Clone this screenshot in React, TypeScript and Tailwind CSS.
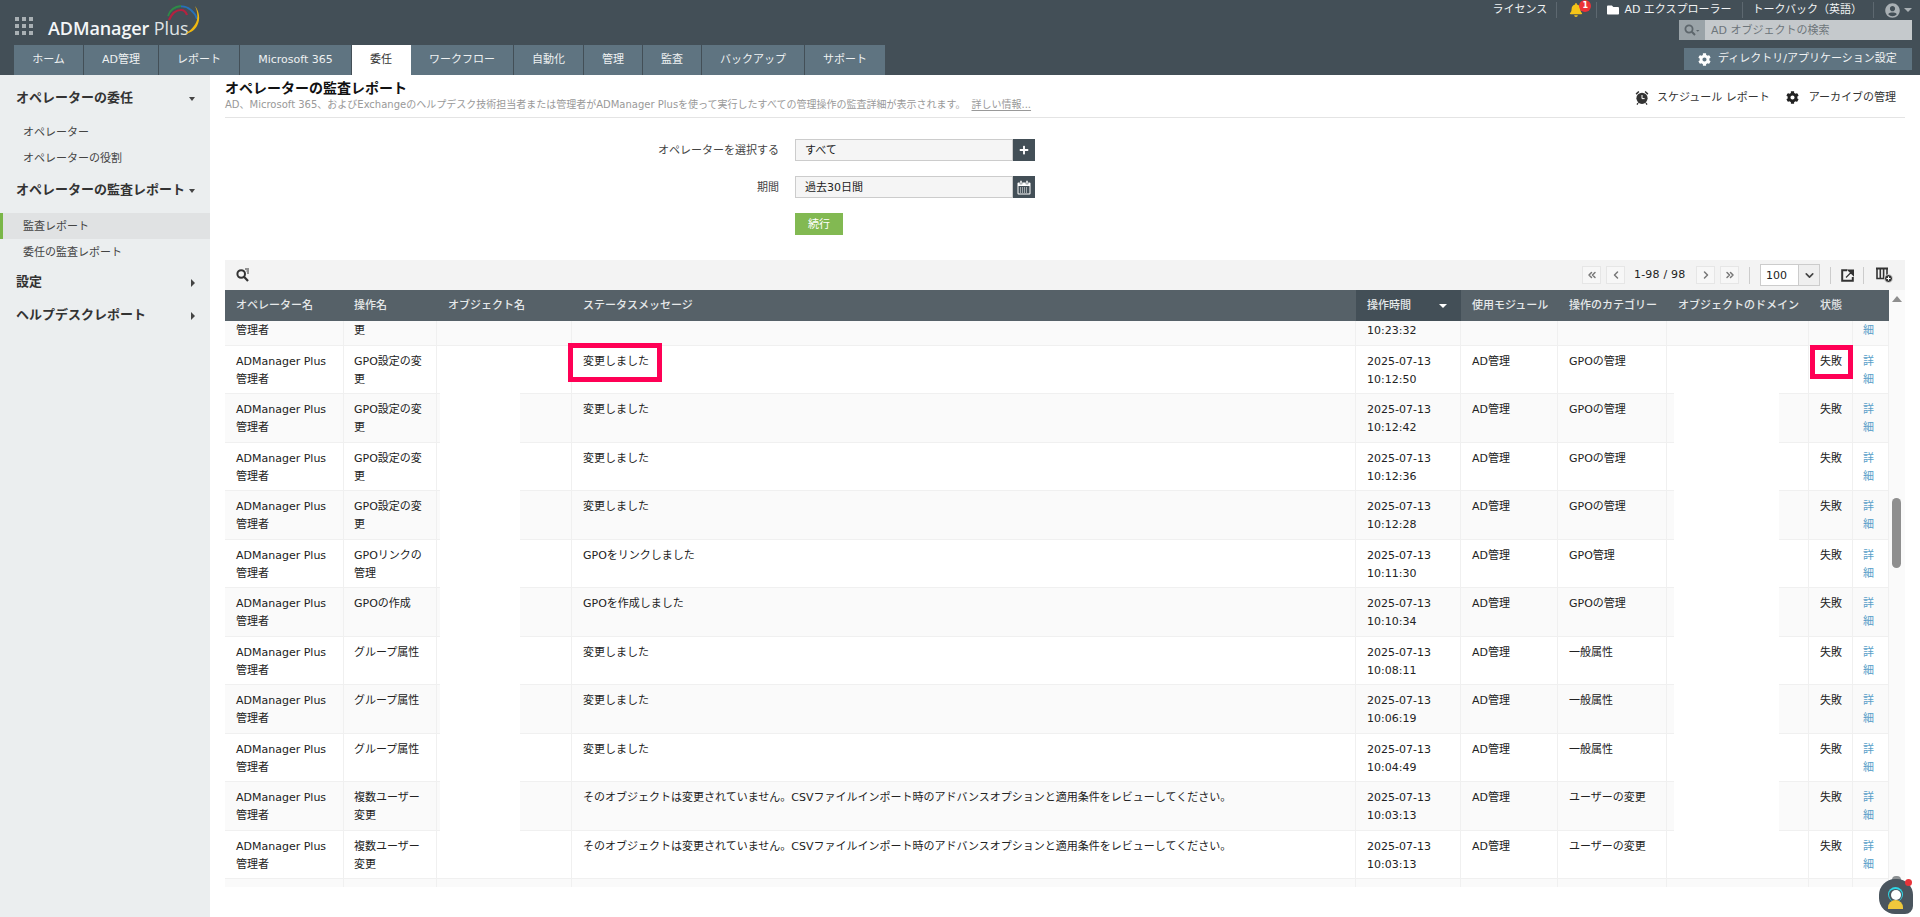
import React from "react";
import { FaBell, FaCog, FaFolder, FaPlus, FaUserCircle } from "react-icons/fa";
import { ChevronDown, ChevronLeft, ChevronRight, ChevronsLeft, ChevronsRight } from "lucide-react";

const tabs = [
  { label: "ホーム", w: "w-[69px]" },
  { label: "AD管理", w: "w-[74px]" },
  { label: "レポート", w: "w-[80px]" },
  { label: "Microsoft 365", w: "w-[111px]" },
  { label: "委任", w: "w-[59px]", active: true },
  { label: "ワークフロー", w: "w-[102px]" },
  { label: "自動化", w: "w-[69px]" },
  { label: "管理", w: "w-[58px]" },
  { label: "監査", w: "w-[58px]" },
  { label: "バックアップ", w: "w-[102px]" },
  { label: "サポート", w: "w-[80px]" },
];

const headers = [
  { label: "オペレーター名", w: "w-[119px]", pl: "pl-[11px]" },
  { label: "操作名", w: "w-[93px]", pl: "pl-[10px]" },
  { label: "オブジェクト名", w: "w-[135px]", pl: "pl-[11px]" },
  { label: "ステータスメッセージ", w: "w-[784px]", pl: "pl-[11px]" },
  { label: "操作時間", w: "w-[105px]", pl: "pl-[11px]", sorted: true },
  { label: "使用モジュール", w: "w-[97px]", pl: "pl-[11px]" },
  { label: "操作のカテゴリー", w: "w-[109px]", pl: "pl-[11px]" },
  { label: "オブジェクトのドメイン", w: "w-[142px]", pl: "pl-[11px]" },
  { label: "状態", w: "w-[44px]", pl: "pl-[11px]" },
  { label: "", w: "w-[36px]", pl: "pl-[10px]" },
];

const changed = "変更しました";
const noChange =
  "そのオブジェクトは変更されていません。CSVファイルインポート時のアドバンスオプションと適用条件をレビューしてください。";

const rows = [
  { op: "GPO設定の変更", msg: changed, time: "10:12:50", cat: "GPOの管理" },
  { op: "GPO設定の変更", msg: changed, time: "10:12:42", cat: "GPOの管理" },
  { op: "GPO設定の変更", msg: changed, time: "10:12:36", cat: "GPOの管理" },
  { op: "GPO設定の変更", msg: changed, time: "10:12:28", cat: "GPOの管理" },
  { op: "GPOリンクの管理", msg: "GPOをリンクしました", time: "10:11:30", cat: "GPO管理" },
  { op: "GPOの作成", msg: "GPOを作成しました", time: "10:10:34", cat: "GPOの管理" },
  { op: "グループ属性", msg: changed, time: "10:08:11", cat: "一般属性" },
  { op: "グループ属性", msg: changed, time: "10:06:19", cat: "一般属性" },
  { op: "グループ属性", msg: changed, time: "10:04:49", cat: "一般属性" },
  { op: "複数ユーザー変更", msg: noChange, time: "10:03:13", cat: "ユーザーの変更" },
  { op: "複数ユーザー変更", msg: noChange, time: "10:03:13", cat: "ユーザーの変更" },
];

const Logo = () => (
  <div className="relative ml-[48px] mt-[15px] w-[155px] h-[26px]">
    <span className="font-['Open_Sans',sans-serif] text-[18px] leading-[26px] font-semibold text-[#f4f6f7] tracking-[-0.1px]">
      ADManager <span className="font-normal text-[#dfe3e5]">Plus</span>
    </span>
    <svg className="absolute left-[118px] -top-[10px]" width="36" height="36" viewBox="0 0 36 36" fill="none">
      <path d="M2 11C4 5 9 1.5 15 1" stroke="#2e8b47" strokeWidth="1.8" />
      <path d="M15 1.5C22 1 29 7 31 14" stroke="#2770b8" strokeWidth="1.8" />
      <path d="M3 15C6 8 11 5 15 5C18 5 20 7 21 10" stroke="#b5213f" strokeWidth="2.2" />
      <path d="M29 1C33 6 35 14 31 21C28 26 24 28 19 29C25 25 29 21 31 15C32 10 31 5 29 1Z" fill="#efb810" />
    </svg>
  </div>
);

const Dots = () => (
  <div className="absolute left-[15px] top-[17px] grid grid-cols-3 gap-[3px]">
    {Array.from({ length: 9 }).map((_, i) => (
      <div key={i} className="w-[4px] h-[4px] bg-[#a9b0b4]" />
    ))}
  </div>
);

const Divider = ({ className = "" }: { className?: string }) => (
  <div className={`w-px h-[16px] bg-[#5d6870] ${className}`} />
);

const Header = () => (
  <header className="relative h-[75px] bg-[#434f57] flex justify-between shrink-0">
    <Dots />
    <div className="flex flex-col justify-between">
      <Logo />
      <nav className="flex ml-[14px] h-[30px] gap-px">
        {tabs.map((t) => (
          <div
            key={t.label}
            className={`${t.w} flex items-center justify-center pt-px text-[11px] ${
              t.active ? "bg-white text-[#333333] -mx-[0.5px]" : "bg-[#5f7481] text-[#eef1f2]"
            }`}
          >
            {t.label}
          </div>
        ))}
      </nav>
    </div>
    <div className="flex flex-col items-end pr-[8px]">
      <div className="flex items-center h-[18px] pt-[2px] text-[11px] text-[#f1f3f4]">
        <span>ライセンス</span>
        <Divider className="ml-[9px]" />
        <div className="relative ml-[12px] w-[26px]">
          <FaBell className="text-[#f5c518] text-[14px]" />
          <span className="absolute left-[10px] -top-[3px] w-[12px] h-[12px] rounded-full bg-[#ec3237] text-white text-[8px] leading-[12px] font-bold text-center">
            1
          </span>
        </div>
        <Divider className="ml-[1px]" />
        <FaFolder className="ml-[10px] text-white text-[12px]" />
        <span className="ml-[5px]">AD エクスプローラー</span>
        <Divider className="ml-[10px]" />
        <span className="ml-[10px]">トークバック（英語）</span>
        <Divider className="ml-[11px]" />
        <FaUserCircle className="ml-[11px] text-[#a9b0b4] text-[15px]" />
        <div className="ml-[4px] w-0 h-0 border-x-[4px] border-x-transparent border-t-[4px] border-t-[#a9b0b4]" />
      </div>
      <div className="mt-[2px] flex w-[233px] h-[20px]">
        <div className="w-[26px] bg-[#9aa3a8] flex items-center justify-center">
          <SearchDropIcon />
        </div>
        <div className="flex-1 bg-[#c5c9cc] pl-[6px] text-[11px] leading-[22px] text-[#6e767b]">AD オブジェクトの検索</div>
      </div>
      <div className="mt-[8px] flex items-center w-[228px] h-[22px] bg-[#5f7481] text-[11px] text-[#f1f3f4] pl-[14px]">
        <FaCog className="text-white text-[13px]" />
        <span className="ml-[7px] pt-px whitespace-nowrap">ディレクトリ/アプリケーション設定</span>
      </div>
    </div>
  </header>
);

const SearchDropIcon = () => (
  <svg width="16" height="12" viewBox="0 0 16 12" fill="none">
    <circle cx="5" cy="5" r="3.6" stroke="#5d666c" strokeWidth="1.8" />
    <path d="M7.8 7.8L11 11" stroke="#5d666c" strokeWidth="2" />
    <path d="M12 6h3.5l-1.75 1.8z" fill="#5d666c" />
  </svg>
);

const CaretDown = () => (
  <div className="w-0 h-0 border-x-[3.5px] border-x-transparent border-t-[4px] border-t-[#444444]" />
);
const CaretRight = () => (
  <div className="w-0 h-0 border-y-[4px] border-y-transparent border-l-[4px] border-l-[#444444]" />
);

const SideHead = ({ label, open, className = "" }: { label: string; open?: boolean; className?: string }) => (
  <div className={`flex items-center justify-between h-[33px] pl-[16px] pr-[15px] text-[13px] font-bold text-[#333333] ${className}`}>
    <span>{label}</span>
    <span className="pt-[3px]">{open ? <CaretDown /> : <CaretRight />}</span>
  </div>
);

const SideItem = ({ label, active }: { label: string; active?: boolean }) => (
  <div
    className={`h-[26px] leading-[28px] pl-[23px] text-[11px] text-[#444444] ${
      active ? "bg-[#e0e2e3] border-l-[3px] border-[#7ab648] !pl-[20px]" : ""
    }`}
  >
    {label}
  </div>
);

const Sidebar = () => (
  <aside className="w-[210px] shrink-0 bg-[#ebeeef] pt-[6px]">
    <SideHead label="オペレーターの委任" open />
    <div className="mt-[5px]">
      <SideItem label="オペレーター" />
      <SideItem label="オペレーターの役割" />
    </div>
    <SideHead label="オペレーターの監査レポート" open className="mt-[2px]" />
    <div className="mt-[7px]">
      <SideItem label="監査レポート" active />
      <SideItem label="委任の監査レポート" />
    </div>
    <SideHead label="設定" />
    <SideHead label="ヘルプデスクレポート" />
  </aside>
);

const AlarmIcon = () => (
  <svg width="14" height="15" viewBox="0 0 14 15">
    <circle cx="7" cy="8.3" r="5.6" fill="#333333" />
    <path d="M0.6 3.6L3.4 1l1 1L1.6 4.8zM13.4 3.6L10.6 1l-1 1 2.8 2.8z" fill="#333333" />
    <path d="M7 5v3.6h2.6" stroke="#ffffff" strokeWidth="1" fill="none" />
    <path d="M3 13l-1 1.6M11 13l1 1.6" stroke="#333333" strokeWidth="1.3" />
  </svg>
);

const CalendarIcon = () => (
  <svg width="14" height="15" viewBox="0 0 14 15" fill="none">
    <rect x="0.5" y="2.5" width="13" height="12" rx="1" fill="#ffffff" />
    <rect x="1.5" y="6" width="11" height="7.5" fill="#434f57" />
    <rect x="3" y="0.5" width="2" height="3.5" fill="#ffffff" stroke="#434f57" strokeWidth="0.5" />
    <rect x="9" y="0.5" width="2" height="3.5" fill="#ffffff" stroke="#434f57" strokeWidth="0.5" />
    <path d="M3 8h8M3 10h8M3 12h8" stroke="#ffffff" strokeWidth="1" strokeDasharray="1 1" />
  </svg>
);

const FilterSearchIcon = () => (
  <svg width="14" height="14" viewBox="0 0 14 14" fill="none">
    <circle cx="5.2" cy="6" r="3.8" stroke="#333333" strokeWidth="2" />
    <path d="M8 8.8L12 13" stroke="#333333" strokeWidth="2.2" />
    <path d="M9 1h4M10.5 3h2.5M11 5h2" stroke="#333333" strokeWidth="1" />
  </svg>
);

const ExportIcon = () => (
  <svg width="13" height="13" viewBox="0 0 13 13" fill="none">
    <path d="M6 1.2H1.2v10.6h10.6V8" stroke="#333333" strokeWidth="2" />
    <path d="M5 8.5L10 3.5M7 1h5.5v5.5z" stroke="#333333" strokeWidth="1.2" fill="#333333" />
  </svg>
);

const ColumnsIcon = () => (
  <svg width="17" height="16" viewBox="0 0 17 16" fill="none">
    <path d="M0 1.5h12" stroke="#333333" strokeWidth="2" />
    <path d="M1 2v9.5h10V2M4.3 2v9.5M7.6 2v9.5" stroke="#333333" strokeWidth="1.6" />
    <circle cx="12.5" cy="11.5" r="4" fill="#333333" stroke="#f3f3f3" strokeWidth="0.8" />
    <path d="M10.5 11.5h4M12.5 9.5v4" stroke="#ffffff" strokeWidth="1" />
  </svg>
);

const PageButton = ({ children }: { children: React.ReactNode }) => (
  <div className="w-[19px] h-[18px] bg-[#f7f7f7] border border-[#e6e6e6] flex items-center justify-center text-[#777777]">
    {children}
  </div>
);

const ToolDivider = () => <div className="w-px h-[17px] bg-[#cccccc]" />;

const Toolbar = () => (
  <div className="h-[30px] bg-[#f3f3f3] flex items-center justify-between pl-[11px] pr-[12px]">
    <FilterSearchIcon />
    <div className="flex items-center text-[11px] text-[#222222]">
      <PageButton><ChevronsLeft size={12} strokeWidth={3} /></PageButton>
      <div className="ml-[5px]"><PageButton><ChevronLeft size={12} strokeWidth={3} /></PageButton></div>
      <span className="ml-[9px] w-[52px] pt-px tracking-[0.2px]">1-98 / 98</span>
      <div className="ml-[10px]"><PageButton><ChevronRight size={12} strokeWidth={3} /></PageButton></div>
      <div className="ml-[5px]"><PageButton><ChevronsRight size={12} strokeWidth={3} /></PageButton></div>
      <div className="ml-[10px]"><ToolDivider /></div>
      <div className="ml-[10px] flex w-[60px] h-[22px] bg-white border border-[#cccccc]">
        <span className="flex-1 pl-[5px] leading-[21px]">100</span>
        <div className="w-[21px] bg-[#efefef] border-l border-[#cccccc] flex items-center justify-center text-[#444444]">
          <ChevronDown size={13} strokeWidth={3} />
        </div>
      </div>
      <div className="ml-[10px]"><ToolDivider /></div>
      <div className="ml-[10px]"><ExportIcon /></div>
      <div className="ml-[9px]"><ToolDivider /></div>
      <div className="ml-[12px]"><ColumnsIcon /></div>
    </div>
  </div>
);

const Cell = ({ w, pl, top = "pt-[7px]", children }: { w: string; pl: string; top?: string; children?: React.ReactNode }) => (
  <div className={`${w} ${pl} ${top} shrink-0 h-full pr-[8px] border-r border-[#f0f0f0] text-[11px] leading-[18px] text-[#222222] overflow-hidden`}>
    {children}
  </div>
);

// the row scrolled half out of view: only its second text line shows
const TopRow = () => (
  <div className="flex h-[24.5px] border-b border-[#f0f0f0] bg-[#fafafa]">
    <Cell w="w-[119px]" pl="pl-[11px]" top="pt-px">管理者</Cell>
    <Cell w="w-[93px]" pl="pl-[10px]" top="pt-px">更</Cell>
    <Cell w="w-[135px]" pl="pl-[11px]" />
    <Cell w="w-[784px]" pl="pl-[11px]" />
    <Cell w="w-[105px]" pl="pl-[11px]" top="pt-px">10:23:32</Cell>
    <Cell w="w-[97px]" pl="pl-[11px]" />
    <Cell w="w-[109px]" pl="pl-[11px]" />
    <Cell w="w-[142px]" pl="pl-[11px]" />
    <Cell w="w-[44px]" pl="pl-[11px]" />
    <Cell w="w-[36px]" pl="pl-[10px]" top="pt-px">
      <span className="text-[#5a9fc9]">細</span>
    </Cell>
  </div>
);

const AuditTable = () => (
  <div className="relative flex">
    <div className="w-[1664px]">
      <div className="flex h-[31px] bg-[#566168]">
        {headers.map((h) => (
          <div
            key={h.label + h.w}
            className={`${h.w} ${h.pl} shrink-0 flex items-center justify-between pt-px pr-[14px] text-[11px] font-medium text-[#e6e9ea] ${
              h.sorted ? "bg-[#434f57]" : ""
            }`}
          >
            <span className="whitespace-nowrap">{h.label}</span>
            {h.sorted && (
              <div className="w-0 h-0 border-x-[4px] border-x-transparent border-t-[4px] border-t-white" />
            )}
          </div>
        ))}
      </div>
      <div className="relative h-[566px] overflow-hidden">
        <TopRow />
        {rows.map((r, i) => (
          <div
            key={i}
            className={`flex h-[48.5px] border-b border-[#f0f0f0] ${i % 2 === 1 ? "bg-[#fafafa]" : "bg-white"}`}
          >
            <Cell w="w-[119px]" pl="pl-[11px]">ADManager Plus 管理者</Cell>
            <Cell w="w-[93px]" pl="pl-[10px]">{r.op}</Cell>
            <Cell w="w-[135px]" pl="pl-[11px]" />
            <Cell w="w-[784px]" pl="pl-[11px]">{r.msg}</Cell>
            <Cell w="w-[105px]" pl="pl-[11px]">2025-07-13 {r.time}</Cell>
            <Cell w="w-[97px]" pl="pl-[11px]">AD管理</Cell>
            <Cell w="w-[109px]" pl="pl-[11px]">{r.cat}</Cell>
            <Cell w="w-[142px]" pl="pl-[11px]" />
            <Cell w="w-[44px]" pl="pl-[11px]">失敗</Cell>
            <Cell w="w-[36px]" pl="pl-[10px]">
              <span className="text-[#5a9fc9]">詳細</span>
            </Cell>
          </div>
        ))}
        <div className="flex h-[48.5px] bg-[#fafafa]">
          <Cell w="w-[119px]" pl="pl-[11px]" />
          <Cell w="w-[93px]" pl="pl-[10px]" />
          <Cell w="w-[135px]" pl="pl-[11px]" />
          <Cell w="w-[784px]" pl="pl-[11px]" />
          <Cell w="w-[105px]" pl="pl-[11px]" />
          <Cell w="w-[97px]" pl="pl-[11px]" />
          <Cell w="w-[109px]" pl="pl-[11px]" />
          <Cell w="w-[142px]" pl="pl-[11px]" />
          <Cell w="w-[44px]" pl="pl-[11px]" />
          <Cell w="w-[36px]" pl="pl-[10px]" />
        </div>
        {/* merged blank cells that sit over the striped rows */}
        <div className="absolute left-[215px] top-[72px] w-[80px] h-[485px] bg-white" />
        <div className="absolute left-[1449px] top-[72px] w-[105px] h-[485px] bg-white" />
        {/* red review marks */}
        <div className="absolute left-[343px] top-[22px] w-[94px] h-[39px] border-[5px] border-[#ff0055]" />
        <div className="absolute left-[1585px] top-[24px] w-[43px] h-[34px] border-[5px] border-[#ff0055]" />
      </div>
    </div>
    <div className="relative w-[16px] bg-[#fafafa]">
      <div className="absolute left-[3px] top-[6px] w-0 h-0 border-x-[5px] border-x-transparent border-b-[6px] border-b-[#8f8f8f]" />
      <div className="absolute left-[3px] top-[208px] w-[9px] h-[70px] rounded-full bg-[#8f8f8f]" />
    </div>
  </div>
);

const Main = () => (
  <main className="flex-1 pl-[15px] pr-[15px] min-w-0">
    <div className="h-[43px] border-b border-[#e4e4e4] flex justify-between">
      <div>
        <h1 className="text-[14px] leading-[16px] mt-[5px] font-bold text-[#111111]">オペレーターの監査レポート</h1>
        <p className="text-[10px] leading-[14px] mt-[2px] text-[#999999]">
          AD、Microsoft 365、およびExchangeのヘルプデスク技術担当者または管理者がADManager Plusを使って実行したすべての管理操作の監査詳細が表示されます。
          <span className="ml-[6px] underline underline-offset-2">詳しい情報...</span>
        </p>
      </div>
      <div className="flex items-center h-[44px] pt-[1px] pr-[9px] text-[11px] text-[#333333]">
        <AlarmIcon />
        <span className="ml-[8px] pt-[2px]">スケジュール レポート</span>
        <FaCog className="ml-[16px] text-[13px] text-[#222222]" />
        <span className="ml-[10px] pt-[2px]">アーカイブの管理</span>
      </div>
    </div>
    <div className="mt-[21px] h-[121px]">
      <div className="grid grid-cols-[570px_240px] gap-y-[15px] items-center text-[11px] text-[#444444]">
        <label className="text-right pr-[16px] pt-[2px]">オペレーターを選択する</label>
        <div className="flex h-[22px]">
          <div className="flex-1 bg-[#f5f5f5] border border-[#cccccc] pl-[9px] leading-[22px] text-[#222222]">すべて</div>
          <div className="w-[22px] bg-[#434f57] flex items-center justify-center text-white">
            <FaPlus className="text-[10px]" />
          </div>
        </div>
        <label className="text-right pr-[16px] pt-[2px]">期間</label>
        <div className="flex h-[22px]">
          <div className="flex-1 bg-[#f5f5f5] border border-[#cccccc] pl-[9px] leading-[22px] text-[#222222]">過去30日間</div>
          <div className="w-[22px] bg-[#434f57] flex items-center justify-center">
            <CalendarIcon />
          </div>
        </div>
        <div />
        <div className="w-[48px] h-[22px] bg-[#82b952] text-white text-center leading-[24px]">続行</div>
      </div>
    </div>
    <Toolbar />
    <AuditTable />
  </main>
);

const ChatWidget = () => (
  <div className="absolute left-[1879px] top-[876px] w-[34px] h-[38px]">
    <div className="absolute left-[13px] top-0 w-[9px] h-[5px] rounded-t bg-[#8b8f92]" />
    <div className="absolute left-0 top-[3px] w-[34px] h-[35px] rounded-[16px] rounded-br-[8px] bg-[#4a555e]" />
    <div className="absolute left-[9px] top-[11px] w-[15px] h-[15px] rounded-full border-t-[2px] border-x-[1px] border-[#2fd6e6]" />
    <div className="absolute left-[12px] top-[14px] w-[10px] h-[10px] rounded-full bg-white" />
    <div className="absolute left-[9px] top-[24px] w-[15px] h-[9px] rounded-t-full rounded-b-[4px] bg-[#eec83c]" />
    <div className="absolute left-[26px] top-[3px] w-[7px] h-[7px] rounded-full bg-[#e8343a]" />
  </div>
);

export default function App() {
  return (
    <div className="relative w-[1920px] h-[917px] overflow-hidden bg-white flex flex-col font-['DejaVu_Sans','Noto_Sans_CJK_JP',sans-serif]">
      <Header />
      <div className="flex flex-1 min-h-0">
        <Sidebar />
        <Main />
      </div>
      <ChatWidget />
    </div>
  );
}
